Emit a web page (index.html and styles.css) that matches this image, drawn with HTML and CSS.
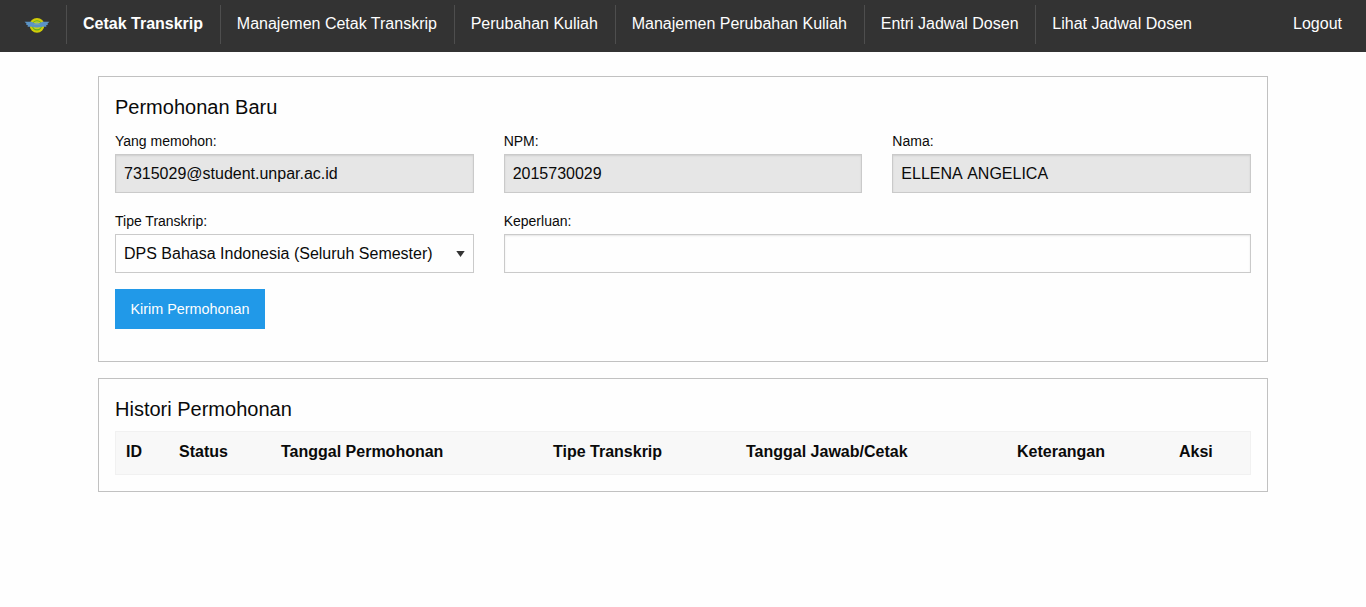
FILE: index.html
```html
<!DOCTYPE html>
<html lang="id">
<head>
<meta charset="utf-8">
<title>Cetak Transkrip</title>
<link rel="stylesheet" href="styles.css">
</head>
<body>
<nav class="top-bar">
  <ul class="menu">
    <li class="menu-item menu-logo">
      <svg class="logo" width="26" height="18" viewBox="0 0 26 18" aria-hidden="true">
        <circle cx="13" cy="9.3" r="7.4" fill="#d0cc08"/>
        <circle cx="13" cy="9.3" r="4.6" fill="#c3cf24" stroke="#5fae22" stroke-width="1.1"/>
        <path d="M0.5 5.8H7.5Q13 8.8 18.5 5.8H25.5L23.5 7.6L24 8.4L22 9.4L22.5 10.8H18Q13 12.2 8 10.8H3.5L4 9.4L2 8.4L2.5 7.6Z" fill="#5b93c5"/>
        <path d="M9.5 8.6L13 6.2L16.5 8.6Z" fill="#8bb095"/>
      </svg>
    </li>
    <li class="menu-item menu-active">Cetak Transkrip</li>
    <li class="menu-item">Manajemen Cetak Transkrip</li>
    <li class="menu-item">Perubahan Kuliah</li>
    <li class="menu-item">Manajemen Perubahan Kuliah</li>
    <li class="menu-item">Entri Jadwal Dosen</li>
    <li class="menu-item">Lihat Jadwal Dosen</li>
  </ul>
  <ul class="menu">
    <li class="menu-item">Logout</li>
  </ul>
</nav>
<main class="content">
  <section class="callout">
    <h5 class="heading">Permohonan Baru</h5>
    <form class="request-form">
      <label class="field">Yang memohon:
        <input class="input" type="text" value="7315029@student.unpar.ac.id" readonly>
      </label>
      <label class="field">NPM:
        <input class="input" type="text" value="2015730029" readonly>
      </label>
      <label class="field">Nama:
        <input class="input" type="text" value="ELLENA ANGELICA" readonly>
      </label>
      <label class="field">Tipe Transkrip:
        <span class="select-wrap">
          <select class="select"><option>DPS Bahasa Indonesia (Seluruh Semester)</option></select>
          <svg class="arrow" width="9" height="6" viewBox="0 0 9 6"><path d="M0.3 0H8.7L4.5 6Z" fill="#333"/></svg>
        </span>
      </label>
      <label class="field field-wide">Keperluan:
        <input class="input" type="text">
      </label>
      <button class="button" type="button">Kirim Permohonan</button>
    </form>
  </section>
  <section class="callout">
    <h5 class="heading">Histori Permohonan</h5>
    <table class="history">
      <colgroup>
        <col class="col-id"><col class="col-status"><col class="col-date"><col class="col-type"><col class="col-answer"><col class="col-note"><col>
      </colgroup>
      <thead>
        <tr><th>ID</th><th>Status</th><th>Tanggal Permohonan</th><th>Tipe Transkrip</th><th>Tanggal Jawab/Cetak</th><th>Keterangan</th><th>Aksi</th></tr>
      </thead>
    </table>
  </section>
</main>
</body>
</html>
```
FILE: styles.css
```css
*, *::before, *::after { box-sizing: border-box; }
body {
  margin: 0;
  background: #fefefe;
  color: #0a0a0a;
  font: 16px/1.5 "Liberation Sans", Arial, sans-serif;
}
.top-bar {
  display: flex;
  justify-content: space-between;
  align-items: flex-start;
  height: 52px;
  padding: 5px 8px 0;
  background: #333;
  color: #fefefe;
}
.menu { display: flex; margin: 0; padding: 0; list-style: none; }
.menu-item {
  height: 39px;
  padding: 11px 16.78px 0 16px;
  line-height: 16px;
  white-space: nowrap;
  border-right: 1px solid #4e4e4e;
}
.menu-item:last-child { padding-right: 16px; border-right: 0; }
.menu-logo { width: 59px; }
.menu-active { font-weight: bold; }
.logo { display: block; }
.content {
  display: flex;
  flex-direction: column;
  gap: 16px;
  width: 1170px;
  margin: 24px auto 0;
}
.callout { padding: 16px; border: 1px solid #c1c1c1; background: #fefefe; }
.heading { margin: 0 0 8px; font-size: 20px; font-weight: normal; line-height: 28px; }
.request-form {
  display: grid;
  grid-template-columns: repeat(3, 1fr);
  gap: 16px 30px;
  margin-bottom: 16px;
}
.field { display: block; font-size: 14px; line-height: 25px; }
.field-wide { grid-column: span 2; }
.input, .select {
  display: block;
  width: 100%;
  height: 39px;
  margin: 0;
  padding: 8px;
  border: 1px solid #cacaca;
  border-radius: 0;
  background: #fefefe;
  color: #0a0a0a;
  font: 16px "Liberation Sans", Arial, sans-serif;
}
.input { box-shadow: inset 0 1px 2px rgba(10, 10, 10, 0.1); word-spacing: 1.8px; }
.input:read-only { background: #e6e6e6; }
.select { appearance: none; padding: 0 24px 0 8px; }
.select-wrap { display: block; position: relative; }
.arrow { position: absolute; right: 9px; top: 17px; }
.button {
  justify-self: start;
  width: 150px;
  height: 40px;
  padding: 0;
  border: 0;
  background: #2199e8;
  color: #fefefe;
  font: 14.4px "Liberation Sans", Arial, sans-serif;
}
.history {
  width: 100%;
  table-layout: fixed;
  border-collapse: separate;
  border-spacing: 0;
  border: 1px solid #f1f1f1;
  background: #f8f8f8;
}
.history th { padding: 8px 10px 10px; text-align: left; }
.col-id { width: 53px; }
.col-status { width: 102px; }
.col-date { width: 272px; }
.col-type { width: 193px; }
.col-answer { width: 271px; }
.col-note { width: 162px; }
```
